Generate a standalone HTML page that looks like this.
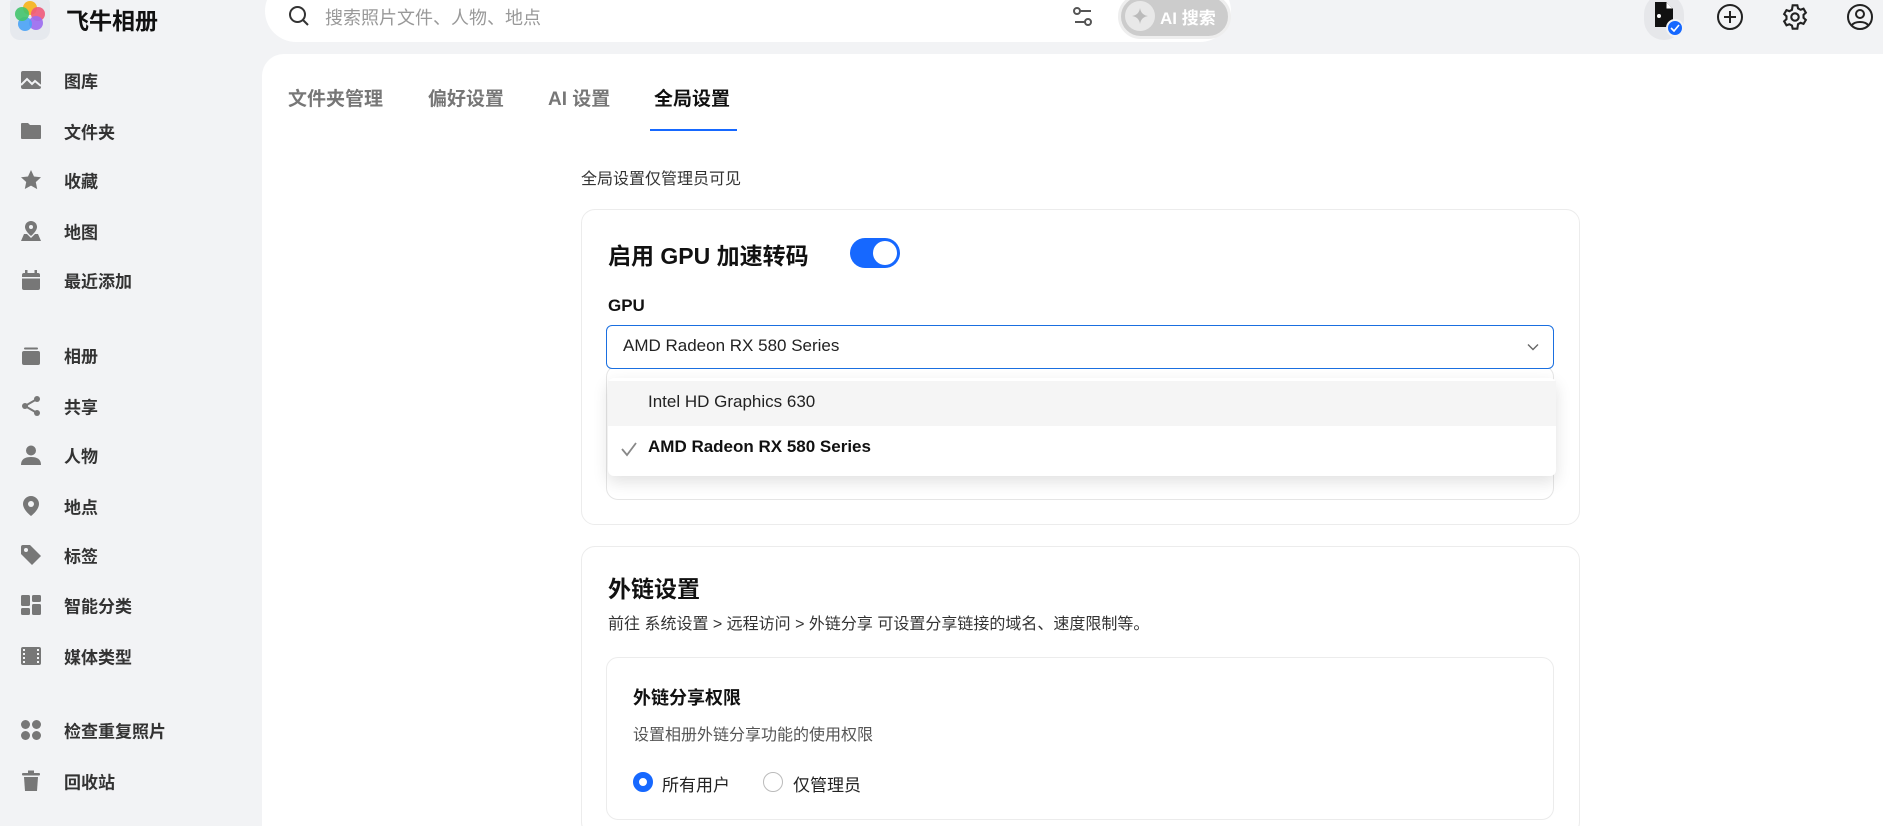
<!DOCTYPE html>
<html style="width:1883px;height:826px;overflow:hidden"><head><meta charset="utf-8"><style>
*{margin:0;padding:0;box-sizing:border-box}
body{width:1883px;height:826px;overflow:hidden;background:#f2f3f5;font-family:"Liberation Sans","Noto Sans CJK SC",sans-serif;position:relative;color:#222}
.abs{position:absolute}
.nav{position:absolute;left:64px;font-size:17px;font-weight:bold;color:#333;transform:translateY(-50%)}
.ic{position:absolute;left:19px;width:24px;height:24px;transform:translateY(-50%)}
.tab{position:absolute;top:84px;font-size:19px;font-weight:bold;color:#777}
</style></head><body>
<div class="abs" style="left:10px;top:-6px;width:40px;height:46px;border-radius:10px;background:#e6e9ee"></div>
<svg class="abs" style="left:12px;top:-4px" width="36" height="40" viewBox="0 0 36 40">
<circle cx="18" cy="12" r="7" fill="#f5b82e"/><circle cx="26" cy="18" r="7" fill="#ef5a7a" opacity=".9"/><circle cx="24" cy="27" r="7" fill="#9b6cf0" opacity=".9"/><circle cx="13" cy="28" r="7" fill="#4aa3f5" opacity=".9"/><circle cx="10" cy="18" r="7" fill="#42c46d" opacity=".9"/></svg>
<div class="abs" style="left:66px;top:2px;font-size:23px;font-weight:bold;color:#111">飞牛相册</div>
<div class="abs" style="left:265px;top:-20px;width:966px;height:62px;border-radius:31px;background:#fff"></div>
<svg class="abs" style="left:287px;top:4px" width="24" height="24" viewBox="0 0 24 24" fill="none" stroke="#333" stroke-width="2"><circle cx="10.5" cy="10.5" r="7.5"/><path d="M16 16l5 5"/></svg>
<div class="abs" style="left:325px;top:4px;font-size:18px;color:#999">搜索照片文件、人物、地点</div>
<svg class="abs" style="left:1072px;top:5px" width="22" height="24" viewBox="0 0 22 24" fill="none" stroke="#555" stroke-width="2"><circle cx="5" cy="6" r="3"/><path d="M8 6h11"/><circle cx="16" cy="17" r="3"/><path d="M3 17h10"/></svg>
<div class="abs" style="left:1118px;top:-6px;width:113px;height:45px;border-radius:23px;background:#ccc;border:3px solid #eee"></div>
<div class="abs" style="left:1125px;top:1px;width:30px;height:30px;border-radius:50%;background:#e8e8e8"></div>
<svg class="abs" style="left:1130px;top:6px" width="20" height="20" viewBox="0 0 20 20"><path d="M10 2Q11 9 18 10Q11 11 10 18Q9 11 2 10Q9 9 10 2Z" fill="#bbb"/></svg>
<div class="abs" style="left:1160px;top:4px;font-size:17px;font-weight:bold;color:#fff">AI 搜索</div>
<div class="abs" style="left:1644px;top:-6px;width:40px;height:46px;border-radius:20px;background:#e6e7ea"></div>
<svg class="abs" style="left:1652px;top:1px" width="24" height="30" viewBox="0 0 24 30"><path d="M3 1h11l7 7v18H3z" fill="#111"/><path d="M14 1v7h7" fill="#fff" stroke="#111"/><circle cx="7" cy="15" r="2" fill="#fff"/></svg>
<div class="abs" style="left:1666px;top:19px;width:18px;height:18px;border-radius:50%;background:#1668ff;border:2px solid #f2f3f5"></div>
<svg class="abs" style="left:1670px;top:24px" width="10" height="8" viewBox="0 0 10 8"><path d="M1 4l3 3 5-6" stroke="#fff" stroke-width="1.6" fill="none"/></svg>
<svg class="abs" style="left:1716px;top:3px" width="28" height="28" viewBox="0 0 28 28" fill="none" stroke="#222" stroke-width="2"><circle cx="14" cy="14" r="12"/><path d="M14 8v12M8 14h12"/></svg>
<svg class="abs" style="left:1781px;top:3px" width="28" height="28" viewBox="0 0 24 24" fill="none" stroke="#222" stroke-width="1.8"><path d="M10 2h4l.6 2.6 2.2 1.2 2.5-.9 2 3.4-2 1.8v2.6l2 1.8-2 3.4-2.5-.9-2.2 1.2L14 22h-4l-.6-2.6-2.2-1.2-2.5.9-2-3.4 2-1.8v-2.6l-2-1.8 2-3.4 2.5.9 2.2-1.2z"/><circle cx="12" cy="12" r="3.2"/></svg>
<svg class="abs" style="left:1846px;top:3px" width="28" height="28" viewBox="0 0 28 28" fill="none" stroke="#222" stroke-width="2"><circle cx="14" cy="14" r="12"/><circle cx="14" cy="11" r="4"/><path d="M6 22c3-4 13-4 16 0"/></svg>
<svg class="ic" style="top:80px" viewBox="0 0 24 24"><rect x="2" y="3" width="20" height="18" rx="2" fill="#777"/><path d="M2 17l6-6 5 5 3-3 6 5" stroke="#f2f3f5" stroke-width="2" fill="none"/></svg><div class="nav" style="top:80px">图库</div>
<svg class="ic" style="top:131px" viewBox="0 0 24 24"><path d="M2 5a1 1 0 011-1h6l2 2h10a1 1 0 011 1v12a1 1 0 01-1 1H3a1 1 0 01-1-1z" fill="#777"/></svg><div class="nav" style="top:131px">文件夹</div>
<svg class="ic" style="top:180px" viewBox="0 0 24 24"><path d="M12 2l3 6.5 7 .8-5.2 4.8 1.4 7L12 17.6 5.8 21l1.4-7L2 9.3l7-.8z" fill="#777"/></svg><div class="nav" style="top:180px">收藏</div>
<svg class="ic" style="top:231px" viewBox="0 0 24 24"><path d="M12 2a6 6 0 016 6c0 4-6 9-6 9S6 12 6 8a6 6 0 016-6z" fill="#777"/><circle cx="12" cy="8" r="2" fill="#f2f3f5"/><path d="M5 15l-3 7h20l-3-7h-3l-4 4-4-4z" fill="#777"/></svg><div class="nav" style="top:231px">地图</div>
<svg class="ic" style="top:280px" viewBox="0 0 24 24"><rect x="3" y="5" width="18" height="17" rx="2" fill="#777"/><rect x="6" y="2" width="2.5" height="5" fill="#777"/><rect x="15.5" y="2" width="2.5" height="5" fill="#777"/><rect x="3" y="9" width="18" height="1.5" fill="#f2f3f5"/></svg><div class="nav" style="top:280px">最近添加</div>
<svg class="ic" style="top:355px" viewBox="0 0 24 24"><rect x="3" y="8" width="18" height="14" rx="2" fill="#777"/><rect x="5" y="4.5" width="14" height="2" rx="1" fill="#777"/></svg><div class="nav" style="top:355px">相册</div>
<svg class="ic" style="top:406px" viewBox="0 0 24 24" fill="#777"><circle cx="18" cy="5" r="3"/><circle cx="6" cy="12" r="3"/><circle cx="18" cy="19" r="3"/><path d="M6 12L18 5M6 12l12 7" stroke="#777" stroke-width="2"/></svg><div class="nav" style="top:406px">共享</div>
<svg class="ic" style="top:455px" viewBox="0 0 24 24" fill="#777"><circle cx="12" cy="7.5" r="5"/><path d="M2 22c0-6 4-8 10-8s10 2 10 8z"/></svg><div class="nav" style="top:455px">人物</div>
<svg class="ic" style="top:506px" viewBox="0 0 24 24"><path d="M12 2a8 8 0 018 8c0 6-8 12-8 12S4 16 4 10a8 8 0 018-8z" fill="#777"/><circle cx="12" cy="10" r="3" fill="#f2f3f5"/></svg><div class="nav" style="top:506px">地点</div>
<svg class="ic" style="top:555px" viewBox="0 0 24 24"><path d="M2 4a2 2 0 012-2h7l11 11-9 9L2 11z" fill="#777"/><circle cx="7" cy="7" r="2" fill="#f2f3f5"/></svg><div class="nav" style="top:555px">标签</div>
<svg class="ic" style="top:605px" viewBox="0 0 24 24" fill="#777"><rect x="2" y="2" width="9" height="11" rx="1.5"/><rect x="13" y="2" width="9" height="7" rx="1.5"/><rect x="2" y="15" width="9" height="7" rx="1.5"/><rect x="13" y="11" width="9" height="11" rx="1.5"/></svg><div class="nav" style="top:605px">智能分类</div>
<svg class="ic" style="top:656px" viewBox="0 0 24 24"><rect x="2" y="3" width="20" height="18" rx="2" fill="#777"/><g fill="#f2f3f5"><rect x="4" y="5" width="2" height="2"/><rect x="4" y="9" width="2" height="2"/><rect x="4" y="13" width="2" height="2"/><rect x="4" y="17" width="2" height="2"/><rect x="18" y="5" width="2" height="2"/><rect x="18" y="9" width="2" height="2"/><rect x="18" y="13" width="2" height="2"/><rect x="18" y="17" width="2" height="2"/></g></svg><div class="nav" style="top:656px">媒体类型</div>
<svg class="ic" style="top:730px" viewBox="0 0 24 24" fill="#777"><circle cx="6.5" cy="6.5" r="4.5"/><circle cx="17.5" cy="6.5" r="4.5"/><circle cx="6.5" cy="17.5" r="4.5"/><circle cx="17.5" cy="17.5" r="4.5"/></svg><div class="nav" style="top:730px">检查重复照片</div>
<svg class="ic" style="top:781px" viewBox="0 0 24 24" fill="#777"><rect x="3" y="4" width="18" height="2.5" rx="1"/><rect x="9" y="1.5" width="6" height="3"/><path d="M5 8h14l-1 14H6z"/></svg><div class="nav" style="top:781px">回收站</div>
<div class="abs" style="left:262px;top:54px;width:1621px;height:772px;background:#fff;border-radius:22px 0 0 0"></div>
<div class="tab" style="left:288px">文件夹管理</div>
<div class="tab" style="left:428px">偏好设置</div>
<div class="tab" style="left:548px">AI 设置</div>
<div class="tab" style="left:654px;color:#111">全局设置</div>
<div class="abs" style="left:650px;top:129px;width:87px;height:2px;background:#1668ff"></div>
<div class="abs" style="left:581px;top:165px;font-size:16px;color:#333">全局设置仅管理员可见</div>
<div class="abs" style="left:581px;top:209px;width:999px;height:316px;border:1px solid #ececec;border-radius:14px"></div>
<div class="abs" style="left:608px;top:237px;font-size:23px;font-weight:bold;color:#111">启用 GPU 加速转码</div>
<div class="abs" style="left:850px;top:238px;width:50px;height:30px;border-radius:15px;background:#1668ff"></div>
<div class="abs" style="left:873px;top:241px;width:24px;height:24px;border-radius:50%;background:#fff"></div>
<div class="abs" style="left:608px;top:296px;font-size:17px;font-weight:bold;color:#111">GPU</div>
<div class="abs" style="left:606px;top:365px;width:948px;height:135px;border:1px solid #e5e5e5;border-radius:12px"></div>
<div class="abs" style="left:606px;top:325px;width:948px;height:44px;border:1.5px solid #1a6fe0;border-radius:6px;background:#fff"></div>
<div class="abs" style="left:623px;top:336px;font-size:17px;color:#222">AMD Radeon RX 580 Series</div>
<svg class="abs" style="left:1526px;top:341px" width="14" height="12" viewBox="0 0 14 12"><path d="M2 3.5l5 5 5-5" stroke="#666" stroke-width="1.4" fill="none"/></svg>
<div class="abs" style="left:608px;top:378px;width:948px;height:98px;background:#fff;border-radius:6px;box-shadow:0 6px 16px rgba(0,0,0,.12)"></div>
<div class="abs" style="left:608px;top:381px;width:948px;height:45px;background:#f5f5f5"></div>
<div class="abs" style="left:648px;top:392px;font-size:17px;color:#222">Intel HD Graphics 630</div>
<svg class="abs" style="left:620px;top:440px" width="18" height="18" viewBox="0 0 18 18"><path d="M2 9l5 6L16 3" stroke="#888" stroke-width="1.8" fill="none"/></svg>
<div class="abs" style="left:648px;top:437px;font-size:17px;font-weight:bold;color:#111">AMD Radeon RX 580 Series</div>
<div class="abs" style="left:581px;top:546px;width:999px;height:290px;border:1px solid #ececec;border-radius:14px"></div>
<div class="abs" style="left:608px;top:570px;font-size:23px;font-weight:bold;color:#111">外链设置</div>
<div class="abs" style="left:608px;top:610px;font-size:16px;color:#333">前往 系统设置 &gt; 远程访问 &gt; 外链分享 可设置分享链接的域名、速度限制等。</div>
<div class="abs" style="left:606px;top:657px;width:948px;height:163px;border:1px solid #ececec;border-radius:12px"></div>
<div class="abs" style="left:633px;top:684px;font-size:18px;font-weight:bold;color:#111">外链分享权限</div>
<div class="abs" style="left:633px;top:721px;font-size:16px;color:#555">设置相册外链分享功能的使用权限</div>
<div class="abs" style="left:633px;top:772px;width:20px;height:20px;border-radius:50%;border:6px solid #1668ff"></div>
<div class="abs" style="left:662px;top:771px;font-size:17px;color:#222">所有用户</div>
<div class="abs" style="left:763px;top:772px;width:20px;height:20px;border-radius:50%;border:1.5px solid #bbb"></div>
<div class="abs" style="left:793px;top:771px;font-size:17px;color:#222">仅管理员</div>
</body></html>
